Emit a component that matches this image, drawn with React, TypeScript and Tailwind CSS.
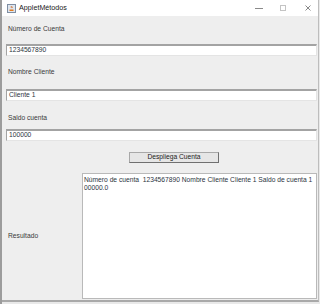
// Swing-style "AppletMétodos" window

const FONT = { fontFamily: '"Liberation Sans", Arial, sans-serif' };

function Field({ value }: { value: string }) {
  return (
    <div className="h-[12px] bg-white border-t-2 border-t-[#a3a3a3] border-l border-l-[#a3a3a3] border-b border-b-[#e4e4e4] border-r border-r-[#e4e4e4] flex items-center pl-[2px] text-[6.7px] text-[#2b3440] leading-none">
      {value}
    </div>
  );
}

function JavaIcon() {
  return (
    <svg width="9" height="9" viewBox="0 0 9 9" className="shrink-0">
      <rect x="0.5" y="0.5" width="8" height="8" fill="#dfe6ee" stroke="#7f8ea3" />
      <path d="M2.5 5.5 h4 v1.5 h-4 z" fill="#e07b1f" />
      <path d="M4 2 q1 1 0 2 M5 2.5 q0.8 0.8 0 1.6" stroke="#d0601a" strokeWidth="0.7" fill="none" />
    </svg>
  );
}

export default function App() {
  return (
    <div className="w-[320px] h-[304px] flex bg-[#e9e9e9] overflow-hidden" style={FONT}>
      {/* desktop strip behind the window */}
      <div className="w-[2px] h-full bg-[#9c9c9c]" />

      <div className="w-[317px] h-[302px] flex flex-col border-r border-r-[#bdbdbd] border-b-2 border-b-[#a9a9a9]">
        {/* Title bar */}
        <div className="h-[16px] bg-white flex items-center pl-[5px] text-[7.2px] text-[#1a1a1a]">
          <JavaIcon />
          <span className="ml-[3px] leading-none">AppletMétodos</span>
          <div className="ml-auto flex items-center h-full">
            <div className="w-[8px] h-px bg-[#8a8a8a] mr-[17px]" />
            <div className="w-[6px] h-[6px] border border-[#c4c4c4] mr-[19px]" />
            <svg width="6" height="6" viewBox="0 0 6 6" className="mr-[7px]">
              <path d="M0.5 0.5 L5.5 5.5 M5.5 0.5 L0.5 5.5" stroke="#6a6a6a" strokeWidth="0.8" />
            </svg>
          </div>
        </div>

        {/* Content */}
        <div className="flex-1 bg-[#eeeeee] flex flex-col pl-[4px] pr-px text-[6.7px] text-[#3a3a3a] leading-none">
          <div className="h-[26px] flex items-center pl-[2px]">Número de Cuenta</div>
          <div className="mt-[2px]">
            <Field value="1234567890" />
          </div>

          <div className="h-[33px] flex items-center pl-[2px]">Nombre Cliente</div>
          <Field value="Cliente 1" />

          <div className="h-[28px] pt-[6px] flex items-center pl-[2px]">Saldo cuenta</div>
          <Field value="100000" />

          <div className="h-[32px] pt-[11px]">
            <button className="ml-[123px] w-[90px] h-[11px] bg-[#e6e6e6] border border-[#a8a8a8] border-r-[#707070] border-b-[#707070] flex items-center justify-center text-[6.7px] text-[#222] leading-none">
              Despliega Cuenta
            </button>
          </div>

          {/* Resultado row */}
          <div className="flex h-[126px]">
            <div className="w-[76px] flex items-center pl-[2px]">Resultado</div>
            <div className="flex-1 bg-white border border-[#b9b9b9] pt-[2px] pl-px text-[#2b3440] leading-[8px]">
              <div className="whitespace-pre">Número de cuenta  1234567890 Nombre Cliente Cliente 1 Saldo de cuenta 1</div>
              <div>00000.0</div>
            </div>
          </div>
        </div>
      </div>
    </div>
  );
}
